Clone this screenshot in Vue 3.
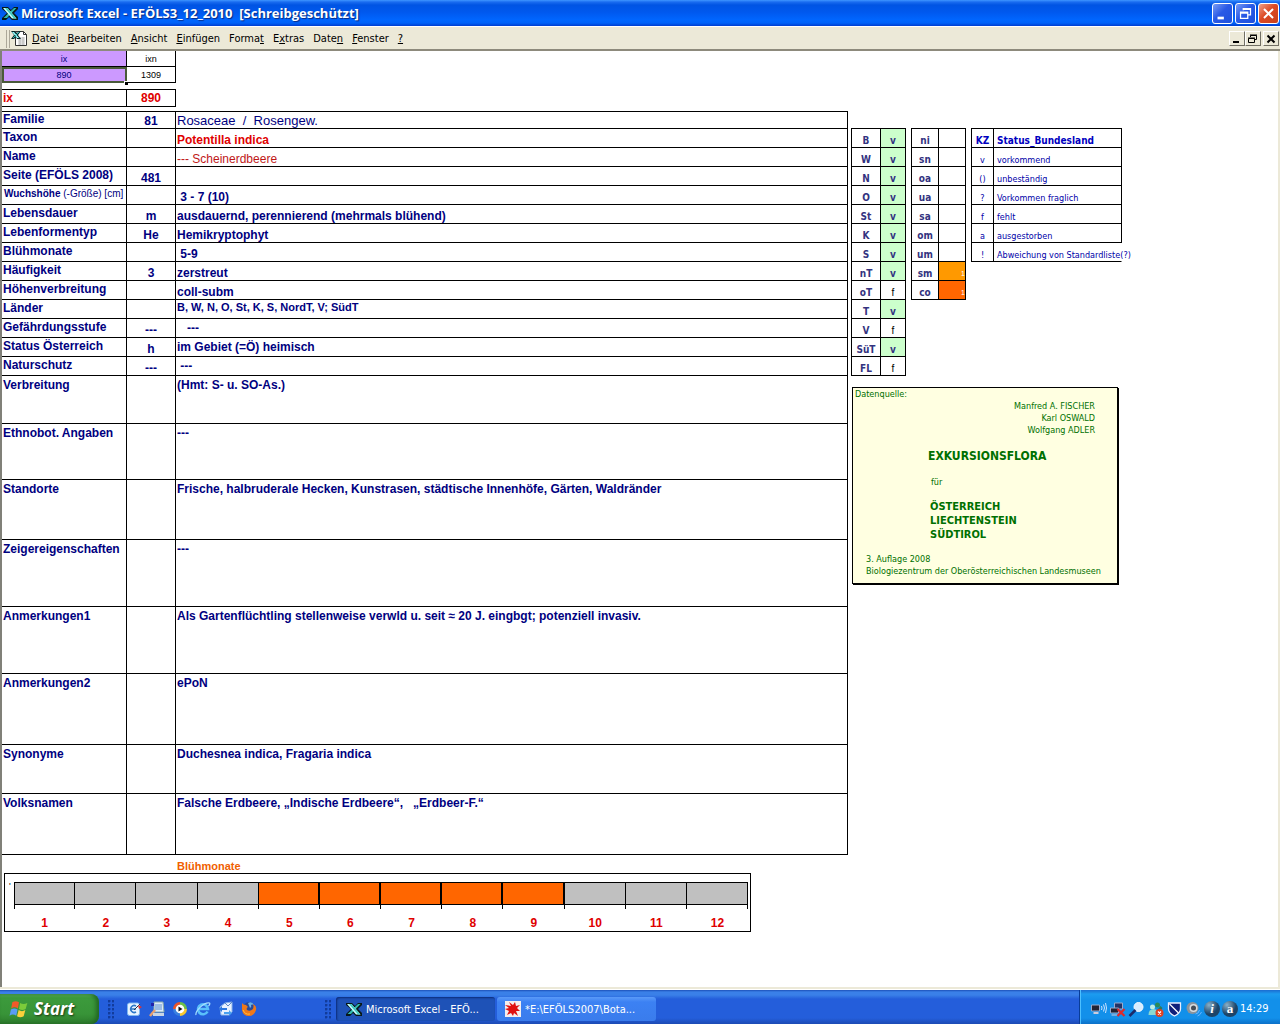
<script setup>
const menus = [
  ['', 'D', 'atei'], ['', 'B', 'earbeiten'], ['', 'A', 'nsicht'], ['', 'E', 'infügen'],
  ['Forma', 't', ''], ['E', 'x', 'tras'], ['Date', 'n', ''], ['', 'F', 'enster'], ['', '?', '']
]

const rows = [
  { label: 'Familie', code: '81', value: 'Rosaceae  /  Rosengew.', h: 17, cls: 'family' },
  { label: 'Taxon', value: 'Potentilla indica', h: 19, cls: 'taxon' },
  { label: 'Name', value: '--- Scheinerdbeere', h: 19, cls: 'name' },
  { label: 'Seite (EFÖLS 2008)', code: '481', value: '', h: 19 },
  { label: 'Wuchshöhe', note: '(-Größe) [cm]', value: ' 3 - 7 (10)', h: 19 },
  { label: 'Lebensdauer', code: 'm', value: 'ausdauernd, perennierend (mehrmals blühend)', h: 19 },
  { label: 'Lebenformentyp', code: 'He', value: 'Hemikryptophyt', h: 19 },
  { label: 'Blühmonate', value: ' 5-9', h: 19 },
  { label: 'Häufigkeit', code: '3', value: 'zerstreut', h: 19 },
  { label: 'Höhenverbreitung', value: 'coll-subm', h: 19 },
  { label: 'Länder', value: 'B, W, N, O, St, K, S, NordT, V; SüdT', h: 19, cls: 'lands' },
  { label: 'Gefährdungsstufe', code: '---', value: '   ---', h: 19, cls: 'mid' },
  { label: 'Status Österreich', code: 'h', value: 'im Gebiet (=Ö) heimisch', h: 19, cls: 'mid' },
  { label: 'Naturschutz', code: '---', value: ' ---', h: 19, cls: 'mid' },
  { label: 'Verbreitung', value: '(Hmt: S- u. SO-As.)', h: 48, cls: 'tall' },
  { label: 'Ethnobot. Angaben', value: '---', h: 56, cls: 'tall' },
  { label: 'Standorte', value: 'Frische, halbruderale Hecken, Kunstrasen, städtische Innenhöfe, Gärten, Waldränder', h: 60, cls: 'tall' },
  { label: 'Zeigereigenschaften', value: '---', h: 67, cls: 'tall' },
  { label: 'Anmerkungen1', value: 'Als Gartenflüchtling stellenweise verwld u. seit ≈ 20 J. eingbgt; potenziell invasiv.', h: 67, cls: 'tall' },
  { label: 'Anmerkungen2', value: 'ePoN', h: 71, cls: 'tall' },
  { label: 'Synonyme', value: 'Duchesnea indica, Fragaria indica', h: 49, cls: 'tall' },
  { label: 'Volksnamen', value: 'Falsche Erdbeere, „Indische Erdbeere“,   „Erdbeer-F.“', h: 61, cls: 'tall' }
]

const states = [
  ['B', 'v'], ['W', 'v'], ['N', 'v'], ['O', 'v'], ['St', 'v'], ['K', 'v'], ['S', 'v'],
  ['nT', 'v'], ['oT', 'f'], ['T', 'v'], ['V', 'f'], ['SüT', 'v'], ['FL', 'f']
]
const zones = [
  ['ni', ''], ['sn', ''], ['oa', ''], ['ua', ''], ['sa', ''], ['om', ''], ['um', ''], ['sm', 'amber'], ['co', 'orange']
]
const legend = [
  ['v', 'vorkommend'], ['()', 'unbeständig'], ['?', 'Vorkommen fraglich'],
  ['f', 'fehlt'], ['a', 'ausgestorben'], ['!', 'Abweichung von Standardliste(?)']
]
const inBloom = (m) => m >= 5 && m <= 9
</script>

<template>
  <div class="window">
    <header class="titlebar">
      <svg class="ico" viewBox="0 0 16 16" width="16" height="16">
        <path d="M0 2h6l3 3 3-3h4v2l-4 4 4 4v3h-6l-3-3-3 3H0v-2l5-5-5-4z" fill="#081818" />
        <path d="M14.500 3H12L1.500 13H5z" fill="#2fb8b0" /><path d="M1 3h4.500l9 10.500H10z" fill="#c8ffff" /><path d="M3 3h2.500l9 10.500H12z" fill="#40c8c0" />
      </svg>
      <h1>Microsoft Excel - EFÖLS3_12_2010&nbsp; [Schreibgeschützt]</h1>
      <div class="controls">
        <button aria-label="Minimieren">
          <svg viewBox="0 0 21 21"><path d="M5 14h7v3H5z" fill="#fff" /></svg>
        </button>
        <button aria-label="Wiederherstellen">
          <svg viewBox="0 0 21 21"><path d="M8 7V5h8v7h-3M5 9h8v7H5zM5 10h8M8 6h8" fill="none" stroke="#fff" stroke-width="1.400" /></svg>
        </button>
        <button class="close" aria-label="Schließen">
          <svg viewBox="0 0 21 21"><path d="M5.500 5.500l10 10M15.500 5.500l-10 10" stroke="#fff" stroke-width="2.200" /></svg>
        </button>
      </div>
    </header>

    <nav class="menubar">
      <span class="grip"></span>
      <svg class="doc" viewBox="0 0 17 17" width="17" height="17">
        <path d="M4.500 1.500h8l3 3v11h-11z" fill="#fff" stroke="#333" /><path d="M12.500 1.500v3h3" fill="none" stroke="#333" />
        <path d="M7 8h7M7 10h7M7 12h7M7 14h7M9 7v8M12 7v8" stroke="#999" stroke-width=".6" />
        <path d="M0 1h4l2 2 2-2h2L7 5l3 4H6L5 7 3 9H0l3-4z" fill="#062a2a" /><path d="M1 2h2l5 6H6z" fill="#9ff" /><path d="M8 2L2 8" stroke="#2fb8b0" />
      </svg>
      <button v-for="m in menus" :key="m.join('')">{{ m[0] }}<u>{{ m[1] }}</u>{{ m[2] }}</button>
      <div class="doc-controls">
        <button aria-label="Fenster minimieren"><svg viewBox="0 0 14 12"><path d="M3 8h6v2H3z" /></svg></button>
        <button aria-label="Fenster wiederherstellen"><svg viewBox="0 0 14 12"><path d="M4.500 4V2.500h6v4H9M2.500 5.500h6v4h-6zM2 5h7M4 2h7" fill="none" stroke="#000" /></svg></button>
        <button class="last" aria-label="Fenster schließen"><svg viewBox="0 0 14 12"><path d="M3.500 2.500l7 7M10.500 2.500l-7 7" stroke="#000" stroke-width="2" /></svg></button>
      </div>
    </nav>

    <main class="sheet">
      <table class="index">
        <tbody>
          <tr><td class="violet">ix</td><td>ixn</td></tr>
          <tr><td class="violet selected">890<i class="handle"></i></td><td>1309</td></tr>
        </tbody>
      </table>
      <table class="current">
        <tbody><tr><th scope="row">ix</th><td>890</td></tr></tbody>
      </table>

      <div class="body">
        <section class="record">
          <table class="data">
            <colgroup><col class="c1" /><col class="c2" /><col /></colgroup>
            <tbody>
              <tr v-for="r in rows" :key="r.label" :class="r.cls" :style="{ height: r.h + 'px' }">
                <th scope="row" :class="{ small: r.note }">{{ r.label }} <span v-if="r.note">{{ r.note }}</span></th>
                <td class="code">{{ r.code }}</td>
                <td class="value">{{ r.value }}</td>
              </tr>
            </tbody>
          </table>

          <h2>Blühmonate</h2>
          <div class="chart">
            <span class="mark">'</span>
            <div class="months">
              <div v-for="m in 12" :key="m" class="month">
                <div class="bar" :class="{ on: inBloom(m) }"></div>
                <span>{{ m }}</span>
              </div>
            </div>
          </div>
        </section>

        <aside class="side">
          <div class="tables">
            <table class="mini states">
              <tbody>
                <tr v-for="s in states" :key="s[0]">
                  <th scope="row">{{ s[0] }}</th><td :class="s[1] === 'v' ? 'yes' : 'no'">{{ s[1] }}</td>
                </tr>
              </tbody>
            </table>
            <table class="mini zones">
              <tbody>
                <tr v-for="z in zones" :key="z[0]">
                  <th scope="row">{{ z[0] }}</th><td :class="z[1]">{{ z[1] ? '1' : '' }}</td>
                </tr>
              </tbody>
            </table>
            <table class="mini legend">
              <thead><tr><th>KZ</th><th>Status_Bundesland</th></tr></thead>
              <tbody>
                <tr v-for="l in legend" :key="l[0]"><td>{{ l[0] }}</td><td>{{ l[1] }}</td></tr>
              </tbody>
            </table>
          </div>

          <div class="source">
            <p>Datenquelle:</p>
            <p class="authors">Manfred A. FISCHER<br />Karl OSWALD<br />Wolfgang ADLER</p>
            <p class="flora">EXKURSIONSFLORA</p>
            <p class="for">für</p>
            <p class="countries">ÖSTERREICH<br />LIECHTENSTEIN<br />SÜDTIROL</p>
            <p class="edition">3. Auflage 2008<br />Biologiezentrum der Oberösterreichischen Landesmuseen</p>
          </div>
        </aside>
      </div>
    </main>

    <footer class="taskbar">
      <button class="start">
        <svg viewBox="0 0 18 18" width="20" height="20">
          <path d="M3 3q3-2 6 0L8 8.500q-3-2-6 0z" fill="#f0592a" /><path d="M10 3.500q3 2 6.500 0l-1.500 5.500q-3 2-6 0z" fill="#7ccb3a" />
          <path d="M1.700 9.500q3-2 6 0L6.500 15q-3-2-6 0z" fill="#5a9cf5" /><path d="M8.700 10q3 2 6 0l-1.500 5.500q-3 2-6 0z" fill="#fcd03c" />
        </svg>
        Start
      </button>
      <span class="dots"></span>
      <div class="quick">
        <svg viewBox="0 0 16 16"><rect x="1.500" y="2" width="12" height="12.500" rx="2" fill="#e8f4ff" stroke="#7fb8f0" /><path d="M10 5a3.500 3.500 0 1 0 0 6M5 8h5" fill="none" stroke="#2c78c8" stroke-width="1.500" /><path d="M8 9l6-6" stroke="#234" /><path d="M12 4l4 2-3 2z" fill="#d33" /></svg>
        <svg viewBox="0 0 16 16"><path d="M5 1h9l1 10H5z" fill="#dbe9fa" stroke="#8aa" /><path d="M6 4h7M6 6h7M6 8h7" stroke="#5a8fd0" /><path d="M1 15l5-6" stroke="#e8a070" stroke-width="2.500" /><path d="M4 12h11v3H4z" fill="#c8d4e4" /><path d="M2 2h3v3H2z" fill="#22a" /></svg>
        <svg viewBox="0 0 16 16"><path d="M8 8V1a7 7 0 0 0-7 7z" fill="#e8552a" /><path d="M8 8h7a7 7 0 0 0-7-7z" fill="#6cc04a" /><path d="M8 8v7a7 7 0 0 0 7-7z" fill="#f8c830" /><path d="M8 8H1a7 7 0 0 0 7 7z" fill="#3a80e0" /><circle cx="8" cy="8" r="4.300" fill="#fff" /><path d="M6.500 5.500l4 2.500-4 2.500z" fill="#111" /></svg>
        <svg viewBox="0 0 16 16"><path d="M12.500 10.500A5 5 0 1 1 13 8H4" fill="none" stroke="#5ac0fa" stroke-width="2.600" /><path d="M1 14C0 10 9 1 14.500 2q1 1-1 3" fill="none" stroke="#a8e0ff" stroke-width="1.200" /></svg>
        <svg viewBox="0 0 16 16"><path d="M2 6l5-4 7-1v10l-3 3H3z" fill="#e8f2ff" stroke="#8ab4e8" /><path d="M7 2l3 3 4-4" fill="none" stroke="#5a88c8" /><path d="M1 8l3-3v2h5v2H4v2z" fill="#2c78e0" /><path d="M14 12l-3-3v2H6v2h5v2z" fill="#48a0f0" /></svg>
        <svg viewBox="0 0 16 16"><circle cx="8" cy="7" r="6" fill="#2a4a98" /><path d="M7 2q4-2 6 2-2-1-3 0 1 2-1 3z" fill="#68b0e8" /><path d="M1 2q1 2 4 2l2 2q-2 1-1 3 3 2 6-1 1-3 0-5 4 2 3 6-2 6-7 6-6 0-7-6 0-4 0-7z" fill="#f07818" /><path d="M2 9q2 5 7 4" fill="none" stroke="#fcc040" /></svg>
      </div>
      <span class="dots"></span>
      <button class="task active">
        <svg viewBox="0 0 16 16" width="16" height="16">
          <path d="M0 2h6l3 3 3-3h4v2l-4 4 4 4v3h-6l-3-3-3 3H0v-2l5-5-5-4z" fill="#081818" />
          <path d="M14.500 3H12L1.500 13H5z" fill="#2fb8b0" /><path d="M1 3h4.500l9 10.500H10z" fill="#c8ffff" /><path d="M3 3h2.500l9 10.500H12z" fill="#40c8c0" />
        </svg>
        <span>Microsoft Excel - EFÖ...</span>
      </button>
      <button class="task">
        <svg viewBox="0 0 16 16" width="16" height="16">
          <path d="M0 0h16v16H0z" fill="#f4eeee" />
          <path d="M6 5L4 1l4 3 2-3 1 4 4-1-3 3 3 3h-4l2 5-4-3-1 3-2-3-4 2 2-4-4-2 4-1-4-3z" fill="#e01010" />
        </svg>
        <span>*E:\EFÖLS2007\Bota...</span>
      </button>

      <div class="tray">
        <svg viewBox="0 0 16 16"><path d="M1 4h8v6H1z" fill="#223" stroke="#9ac" /><path d="M3 12h5" stroke="#ccd" stroke-width="2" /><path d="M11 5q1 2 0 4M13 3.500q2 3.500 0 7M15 2q2 5 0 10" fill="none" stroke="#cfe4ff" /></svg>
        <svg viewBox="0 0 16 16"><path d="M5 2h8v6H5z" fill="#236" stroke="#9ac" /><path d="M1 7h8v5H1z" fill="#223" stroke="#9ac" /><path d="M2 14h6" stroke="#ccd" /><path d="M8 8l7 7M15 8l-7 7" stroke="#e02828" stroke-width="2.200" /></svg>
        <svg viewBox="0 0 16 16"><circle cx="10" cy="6" r="4.500" fill="#d8ecff" stroke="#f4faff" /><path d="M1 15l6-6" stroke="#1a2a6a" stroke-width="2.500" /></svg>
        <svg viewBox="0 0 16 16"><circle cx="5" cy="6" r="2.500" fill="#bfeee4" /><circle cx="10" cy="4" r="2.500" fill="#2a8a5a" /><path d="M1 14q0-6 5-6t5 6z" fill="#8ad8d0" /><path d="M8 11l5-6 2 2-3 5z" fill="#2a7a5a" /><circle cx="12" cy="12" r="4" fill="#e04020" /><path d="M10.500 10.500l3 3M13.500 10.500l-3 3" stroke="#fff" stroke-width="1.200" /></svg>
        <svg viewBox="0 0 16 16"><path d="M2 2h12v6q0 4-6 7-6-3-6-7z" fill="#10207a" stroke="#e8eeff" stroke-width="1.300" /><path d="M3 3l9 9" stroke="#fff" stroke-width="1.300" /></svg>
        <svg viewBox="0 0 16 16"><circle cx="7" cy="7" r="6" fill="#8a949c" /><circle cx="8" cy="7" r="4" fill="#d8dce0" /><circle cx="8" cy="7" r="2.500" fill="#444c54" /><path d="M10 13q3 0 4-4M12 15q3-1 4-4" fill="none" stroke="#6ab4ff" /></svg>
        <span class="orb italic">i</span>
        <span class="orb">a</span>
        <time>14:29</time>
      </div>
    </footer>
  </div>
</template>

<style>
body { margin: 0; background: #fff; }
</style>

<style scoped>
* { box-sizing: border-box; }
button { border: 0; padding: 0; background: none; font: inherit; color: inherit; cursor: pointer; }
table { border-collapse: separate; border-spacing: 0; table-layout: fixed; }
th, td { padding: 0; font-weight: inherit; white-space: pre; }
h1, h2, p { margin: 0; }

.window { min-height: 100vh; display: flex; flex-direction: column; font: 10px/14px "Liberation Sans", Arial, sans-serif; }

.titlebar {
  height: 26px; flex: none; display: flex; align-items: center; padding: 0 1px 0 2px;
  background: linear-gradient(#3f96ff 0, #1a6cf0 2px, #0054e3 5px, #0058ee 12px, #0066ff 20px, #0062f8 23px, #003dd0 26px);
}
.ico { margin-right: 3px; }
h1 { flex: 1; color: #fff; font: bold 13px/20px "Open Sans", "Noto Sans", sans-serif; text-shadow: 1px 1px 1px #0a2a80; white-space: nowrap; }
.controls { display: flex; gap: 2px; }
.controls button {
  width: 21px; height: 21px; border: 1px solid #fff; border-radius: 3px;
  background: linear-gradient(135deg, #7a9cf4, #2a5ae6 45%, #1e50dc);
}
.controls svg { display: block; width: 19px; height: 19px; }
.controls .close { background: linear-gradient(135deg, #f0a088, #dc4a24 45%, #c8401c); }

.menubar {
  height: 25px; flex: none; display: flex; align-items: center; padding: 1px 1px 0 6px;
  background: #ece9d8; border-top: 1px solid #fff; border-bottom: 2px solid #8d8a7c;
  font: 11px/16px "DejaVu Sans Condensed", Tahoma, sans-serif;
}
.grip { width: 4px; height: 18px; border-left: 1px solid #aca899; border-right: 1px solid #aca899; }
.doc { margin: 0 4px 0 1px; }
.menubar > button { margin-right: 9px; }
.doc-controls { margin-left: auto; display: flex; }
.doc-controls button { width: 16px; height: 15px; border: 1px solid; border-color: #fff #716f64 #716f64 #fff; }
.doc-controls svg { display: block; width: 14px; height: 12px; }
.doc-controls .last { margin-left: 2px; }

.sheet { flex: 1; border: solid #ece9d8; border-width: 0 2px 2px 0; box-shadow: inset 2px 0 #808078; padding-left: 2px; margin-bottom: 1px; }
.index { width: 174px; text-align: center; }
.index td { height: 16px; line-height: 14px; font-size: 9px; border: solid #000; border-width: 0 1px 1px 0; }
.index td:first-child { width: 125px; }
.index .violet { background: #cc99ff; color: #000080; }
.index .selected { position: relative; outline: 2px solid #4a5a3a; outline-offset: -2px; }
.handle { position: absolute; right: -2px; bottom: -3px; width: 4px; height: 4px; background: #000; border: solid #fff; border-width: 1px 0 0 1px; }
.current { width: 174px; margin: 6px 0 4px; border-top: 1px solid #000; color: #e00000; font-weight: bold; font-size: 12px; }
.current th, .current td { height: 17px; border: solid #000; border-width: 0 1px 1px 0; }
.current th { width: 125px; text-align: left; padding-left: 1px; }
.current td { text-align: center; }

.body { display: flex; align-items: flex-start; }
.record { flex: 1; min-width: 0; }
.data { width: 100%; border-top: 1px solid #000; color: #000080; font-weight: bold; font-size: 12px; }
.c1 { width: 125px; }
.c2 { width: 49px; }
.data th, .data td { border: solid #000; border-width: 0 1px 1px 0; }
.data th { text-align: left; vertical-align: top; padding: 1px 0 0 1px; }
.data th.small { font-size: 10px; padding-left: 2px; }
.small span { font-weight: normal; }
.data .code { text-align: center; vertical-align: bottom; }
.data .value { vertical-align: bottom; padding-left: 1px; }
.family .value { font-weight: normal; font-size: 13px; }
.data .family th { padding-top: 0; }
.taxon .value { color: #e00000; }
.name .value { color: #c01818; font-weight: normal; }
.lands .value { font-size: 11px; }
.data .lands .value { vertical-align: top; }
.data .mid .value { vertical-align: middle; }
.data .tall th { padding-top: 2px; }
.data .tall .value { vertical-align: top; padding-top: 2px; }

h2 { padding-left: 175px; margin-top: 4px; color: #f06000; font: bold 11px/14px "Liberation Sans", Arial, sans-serif; }
.chart { position: relative; width: calc(100% - 99px); margin: 0 0 0 2px; border: 1px solid #000; padding: 8px 2px 1px 9px; }
.mark { position: absolute; left: 4px; top: 5px; font-size: 9px; }
.months { display: flex; }
.month { flex: 1; text-align: center; color: #e00000; font: bold 12px/14px "Liberation Sans", Arial, sans-serif; position: relative; }
.bar { height: 23px; margin-bottom: 11px; background: #c0c0c0; border: solid #000; border-width: 1px 1px 1px 0; }
.bar.on { background: #ff6600; border-right-width: 2px; }
.month:first-child .bar { border-left-width: 1px; }
.month::after { content: ""; position: absolute; right: 0; top: 23px; height: 4px; border-right: 1px solid #000; }
.month:first-child::before { content: ""; position: absolute; left: 0; top: 23px; height: 4px; border-left: 1px solid #000; }

.side { flex: 0 0 430px; padding: 17px 0 0 3px; }
.tables { display: flex; gap: 5px; align-items: flex-start; }
.mini { border: solid #000; border-width: 1px 0 0 1px; text-align: center; color: #333380; }
.mini th, .mini td { height: 19px; vertical-align: bottom; line-height: 13px; border: solid #000; border-width: 0 1px 1px 0; }
.mini th, .mini .yes { font: bold 10px/13px "DejaVu Sans Condensed", Tahoma, sans-serif; }
.states { width: 55px; }
.states th { width: 29px; }
.yes { background: #ccffcc; }
.no { color: #000; }
.zones { width: 55px; }
.zones th { width: 27px; }
.zones td { color: #fff; font-size: 7px; text-align: right; }
.amber { background: #ff9900; }
.orange { background: #ff6600; }
.legend { width: 151px; color: #0000a8; }
.legend td { font: 9px/12px "DejaVu Sans Condensed", Tahoma, sans-serif; }
.legend th:first-child { width: 22px; }
.legend th { color: #0000c0; }
.legend th:last-child, .legend td:last-child { text-align: left; padding-left: 3px; }
.legend tbody tr:last-child td:last-child { border-right-color: transparent; }

.source {
  width: 266px; margin: 11px 0 0 1px; padding: 0 2px 6px; background: #ffffe1; color: #007000;
  border: 1px solid #000; box-shadow: 1px 1px #000; font: 9px/12px "DejaVu Sans Condensed", Tahoma, sans-serif;
}
.authors { text-align: right; padding-right: 20px; }
.flora { font-weight: bold; font-size: 12px; line-height: 16px; margin: 12px 0 0 73px; }
.for { margin: 12px 0 0 76px; }
.countries { font-weight: bold; font-size: 11px; line-height: 14px; margin: 12px 0 0 75px; }
.edition { margin: 11px 0 0 11px; white-space: nowrap; }

.taskbar {
  height: 34px; flex: none; display: flex; align-items: stretch; color: #fff;
  background: linear-gradient(#1c50b8 0, #3a80e8 2px, #3a80e8 5px, #245edb 9px, #245edb 28px, #1c4ab4 34px);
  font: 11px/16px "DejaVu Sans Condensed", Tahoma, sans-serif;
}
.start {
  width: 99px; margin-top: 4px; padding: 0 0 0 9px; display: flex; align-items: center; gap: 5px;
  font: italic bold 17px/20px "Open Sans", "Noto Sans", sans-serif; text-shadow: 1px 1px 2px #1a3a10;
  background: linear-gradient(#5cb05c 0, #3c9a3c 4px, #389438 20px, #2c7a2c 30px); border-radius: 0 8px 8px 0; box-shadow: inset -3px 0 4px #226622;
}
.dots { width: 6px; margin: 10px 10px 4px 9px; background: radial-gradient(circle at 1px 1px, #123c9c 1px, transparent 2px) 0 0 / 4px 4px; }
.quick { display: flex; align-items: center; gap: 7px; flex: 0 0 200px; padding: 3px 0 0 0; }
.quick svg { width: 16px; height: 16px; transform-origin: center; }
.dots + .quick { margin-left: -4px; padding-left: 0; }
.quick + .dots { margin: 10px 4px 4px 5px; }
.task {
  width: 159px; margin: 7px 1px 3px; padding: 0 8px; display: flex; align-items: center; gap: 4px; border-radius: 3px;
  background: linear-gradient(#5a9af8, #3c81f3 5px, #3a7cec); white-space: nowrap;
}
.dots + .quick { margin-left: 0; padding-left: 0; }
.quick + .dots { margin-left: 1px; }
.dots + .quick { padding-left: 2px; }
.task.active { background: #1e52b7; box-shadow: inset 1px 1px 2px #0c2c78; padding-left: 10px; }
.task span { padding-top: 2px; }
.tray {
  margin-left: auto; width: 201px; display: flex; align-items: center; gap: 2px; padding: 4px 12px 0 10px;
  background: linear-gradient(#1c6cd0 0, #1c9cf0 4px, #1290ea 10px, #1290ea 28px, #0c70c8); border-left: 1px solid #083c98; box-shadow: inset 1px 0 #4cc0ff;
}
.tray svg { width: 17px; height: 16px; flex: none; }
.orb { width: 16px; height: 16px; flex: none; border-radius: 8px; background: radial-gradient(circle at 5px 4px, #8ab0c8, #1c4468 9px); text-align: center; font: bold 13px/16px "Liberation Serif", serif; }
.italic { font-style: italic; }
time { margin-left: auto; }
</style>
